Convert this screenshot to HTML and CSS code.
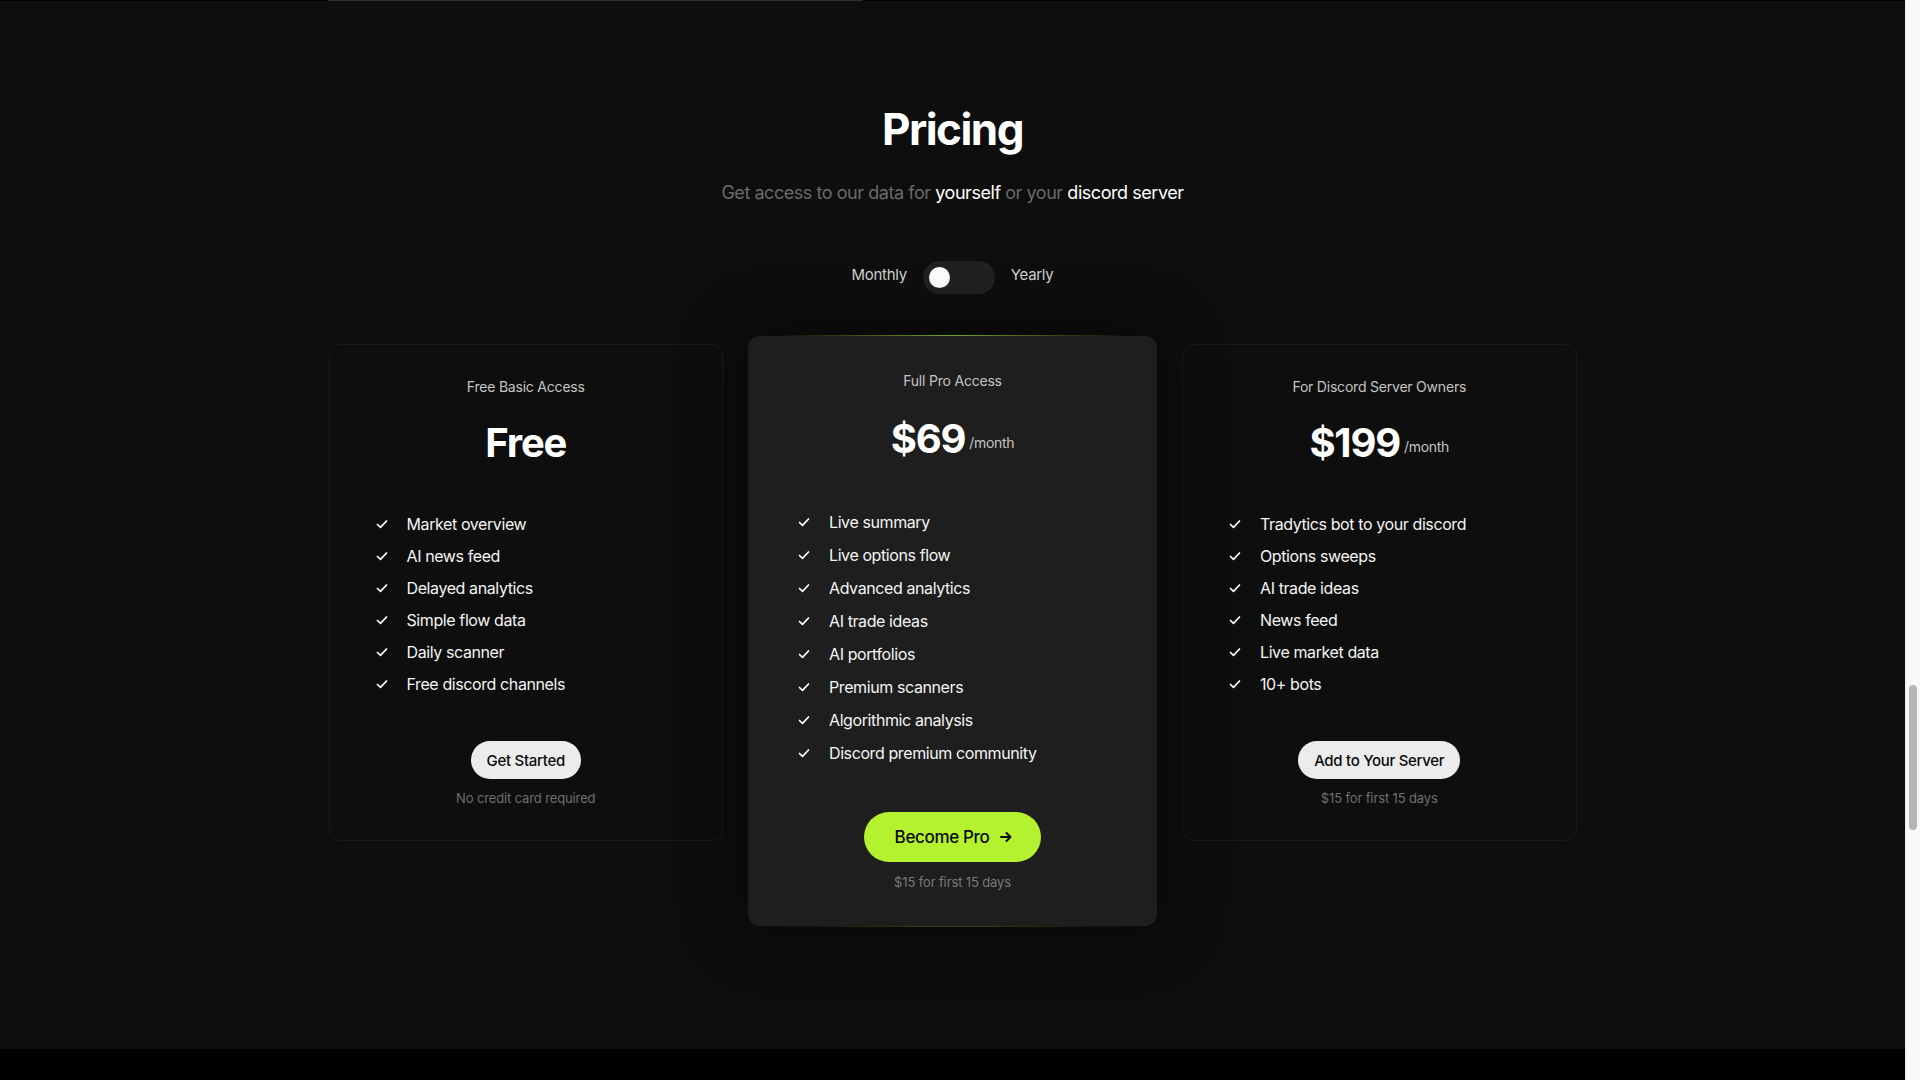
FILE: index.html
```html
<!DOCTYPE html>
<html lang="en">
<head>
<meta charset="utf-8">
<title>Pricing</title>
<link rel="stylesheet" href="styles.css">
</head>
<body>
<div class="page">
  <div class="top-strip"><div class="top-line"></div></div>
  <section class="pricing">
    <h1 class="title">Pricing</h1>
    <p class="subtitle">Get access to our data for <span class="hl">yourself</span> or your <span class="hl">discord server</span></p>
    <div class="toggle-row">
      <span class="toggle-label">Monthly</span>
      <div class="toggle"><div class="knob"></div></div>
      <span class="toggle-label">Yearly</span>
    </div>
    <div class="cards">
      <div class="card side">
        <div class="plan">Free Basic Access</div>
        <div class="price-row"><span class="price">Free</span></div>
        <ul class="features">
          <li><svg class="check" viewBox="0 0 12 12"><path d="M1.5 6.5 L4.5 9.3 L10.5 3"/></svg>Market overview</li>
          <li><svg class="check" viewBox="0 0 12 12"><path d="M1.5 6.5 L4.5 9.3 L10.5 3"/></svg>AI news feed</li>
          <li><svg class="check" viewBox="0 0 12 12"><path d="M1.5 6.5 L4.5 9.3 L10.5 3"/></svg>Delayed analytics</li>
          <li><svg class="check" viewBox="0 0 12 12"><path d="M1.5 6.5 L4.5 9.3 L10.5 3"/></svg>Simple flow data</li>
          <li><svg class="check" viewBox="0 0 12 12"><path d="M1.5 6.5 L4.5 9.3 L10.5 3"/></svg>Daily scanner</li>
          <li><svg class="check" viewBox="0 0 12 12"><path d="M1.5 6.5 L4.5 9.3 L10.5 3"/></svg>Free discord channels</li>
        </ul>
        <div class="cta">
          <a class="btn light">Get Started</a>
          <span class="note">No credit card required</span>
        </div>
      </div>

      <div class="card pro">
        <div class="plan">Full Pro Access</div>
        <div class="price-row"><span class="price">$69</span><span class="per">/month</span></div>
        <ul class="features">
          <li><svg class="check" viewBox="0 0 12 12"><path d="M1.5 6.5 L4.5 9.3 L10.5 3"/></svg>Live summary</li>
          <li><svg class="check" viewBox="0 0 12 12"><path d="M1.5 6.5 L4.5 9.3 L10.5 3"/></svg>Live options flow</li>
          <li><svg class="check" viewBox="0 0 12 12"><path d="M1.5 6.5 L4.5 9.3 L10.5 3"/></svg>Advanced analytics</li>
          <li><svg class="check" viewBox="0 0 12 12"><path d="M1.5 6.5 L4.5 9.3 L10.5 3"/></svg>AI trade ideas</li>
          <li><svg class="check" viewBox="0 0 12 12"><path d="M1.5 6.5 L4.5 9.3 L10.5 3"/></svg>AI portfolios</li>
          <li><svg class="check" viewBox="0 0 12 12"><path d="M1.5 6.5 L4.5 9.3 L10.5 3"/></svg>Premium scanners</li>
          <li><svg class="check" viewBox="0 0 12 12"><path d="M1.5 6.5 L4.5 9.3 L10.5 3"/></svg>Algorithmic analysis</li>
          <li><svg class="check" viewBox="0 0 12 12"><path d="M1.5 6.5 L4.5 9.3 L10.5 3"/></svg>Discord premium community</li>
        </ul>
        <div class="cta">
          <a class="btn lime">Become Pro <svg class="arrow" viewBox="0 0 12 10"><path d="M1 5 H10.5 M6.5 1 L10.5 5 L6.5 9"/></svg></a>
          <span class="note">$15 for first 15 days</span>
        </div>
      </div>

      <div class="card side">
        <div class="plan">For Discord Server Owners</div>
        <div class="price-row"><span class="price">$199</span><span class="per">/month</span></div>
        <ul class="features">
          <li><svg class="check" viewBox="0 0 12 12"><path d="M1.5 6.5 L4.5 9.3 L10.5 3"/></svg>Tradytics bot to your discord</li>
          <li><svg class="check" viewBox="0 0 12 12"><path d="M1.5 6.5 L4.5 9.3 L10.5 3"/></svg>Options sweeps</li>
          <li><svg class="check" viewBox="0 0 12 12"><path d="M1.5 6.5 L4.5 9.3 L10.5 3"/></svg>AI trade ideas</li>
          <li><svg class="check" viewBox="0 0 12 12"><path d="M1.5 6.5 L4.5 9.3 L10.5 3"/></svg>News feed</li>
          <li><svg class="check" viewBox="0 0 12 12"><path d="M1.5 6.5 L4.5 9.3 L10.5 3"/></svg>Live market data</li>
          <li><svg class="check" viewBox="0 0 12 12"><path d="M1.5 6.5 L4.5 9.3 L10.5 3"/></svg>10+ bots</li>
        </ul>
        <div class="cta">
          <a class="btn light">Add to Your Server</a>
          <span class="note">$15 for first 15 days</span>
        </div>
      </div>
    </div>
  </section>
  <div class="footer-band"></div>
</div>
<div class="scrollbar"><div class="thumb"></div></div>
</body>
</html>
```
FILE: styles.css
```css
* { box-sizing: border-box; }
html, body { margin: 0; padding: 0; height: 100%; }
body {
  display: flex;
  overflow: hidden;
  background: #0e0e0e;
  font-family: Inter, "Noto Sans", sans-serif;
  color: #f2f2f2;
}
.page {
  flex: 1;
  display: flex;
  flex-direction: column;
  min-width: 0;
}
.top-strip { height: 1px; background: #000; flex: none; }
.top-line { margin-left: 328px; width: 535px; height: 1px; background: #303030; }

.pricing {
  height: 1048px;
  flex: none;
  background: #0e0e0e;
  padding-top: 102px;
  display: flex;
  flex-direction: column;
  align-items: center;
}
.title {
  margin: 0;
  font-size: 44px;
  line-height: 52px;
  font-weight: 700;
  letter-spacing: -0.035em;
  color: #fff;
}
.subtitle {
  margin: 24px 0 0;
  font-size: 18px;
  line-height: 28px;
  color: #6a6a6a;
  letter-spacing: -0.025em;
}
.subtitle .hl { color: #fff; }

.toggle-row {
  margin-top: 54px;
  display: flex;
  align-items: center;
  gap: 16px;
}
.toggle-label {
  font-size: 15px;
  line-height: 20px;
  color: #d2d2d2;
  padding-bottom: 5px;
  letter-spacing: -0.02em;
}
.toggle {
  width: 72px;
  height: 33px;
  border-radius: 17px;
  background: #212121;
  display: flex;
  align-items: center;
  padding-left: 6px;
}
.knob { width: 21px; height: 21px; border-radius: 50%; background: #fff; }

.cards {
  margin-top: 42px;
  width: 1248px;
  display: grid;
  grid-template-columns: 1fr 409px 1fr;
  gap: 25px;
  align-items: start;
}
.card {
  display: flex;
  flex-direction: column;
  align-items: center;
  border-radius: 12px;
}
.card.side {
  margin-top: 8px;
  border: 1px solid #1a1a1a;
  background: #0e0e0e;
  padding: 32px 0 33px;
}
.card.pro {
  position: relative;
  background: #1e1e1e;
  padding: 35px 0 35px;
  box-shadow: 0 0 60px 10px rgba(0,0,0,0.45);
}
.card.pro::before, .card.pro::after {
  content: "";
  position: absolute;
  left: 30px;
  right: 30px;
  height: 1px;
  background: linear-gradient(90deg, rgba(140,190,40,0) 0%, rgba(140,190,40,0.85) 50%, rgba(140,190,40,0) 100%);
}
.card.pro::before { top: -1px; }
.card.pro::after { bottom: -1px; opacity: 0.4; }

.plan {
  font-size: 14px;
  line-height: 20px;
  color: #c4c4c4;
  letter-spacing: -0.015em;
}
.price-row {
  margin-top: 22px;
  display: flex;
  align-items: flex-end;
  gap: 4px;
}
.pro .price-row { margin-top: 24px; }
.price {
  font-size: 40px;
  line-height: 48px;
  font-weight: 700;
  letter-spacing: -0.03em;
  color: #fff;
}
.per {
  font-size: 14px;
  line-height: 20px;
  color: #c4c4c4;
  margin-bottom: 10px;
  letter-spacing: -0.02em;
}

.features {
  list-style: none;
  margin: 45px 0 0;
  padding: 0 0 0 46px;
  align-self: stretch;
  display: flex;
  flex-direction: column;
  gap: 8px;
}
.pro .features { margin-top: 47px; padding-left: 50px; gap: 9px; }
.features li {
  display: flex;
  align-items: center;
  gap: 19px;
  font-size: 16px;
  line-height: 24px;
  color: #f4f4f4;
  letter-spacing: -0.025em;
}
.check {
  width: 12px;
  height: 12px;
  flex: none;
  fill: none;
  stroke: #fff;
  stroke-width: 1.7;
  stroke-linecap: round;
  stroke-linejoin: round;
}

.cta {
  margin-top: 45px;
  display: flex;
  flex-direction: column;
  align-items: center;
  gap: 10px;
}
.pro .cta { margin-top: 47px; gap: 11px; }
.btn {
  display: inline-flex;
  align-items: center;
  justify-content: center;
  border-radius: 999px;
  font-weight: 500;
  color: #0a0a0a;
  text-decoration: none;
  letter-spacing: -0.02em;
}
.btn.light {
  height: 38px;
  padding: 0 16px;
  background: #ececec;
  font-size: 15px;
}
.btn.lime {
  height: 50px;
  padding: 0 29px 0 31px;
  background: #b4f22f;
  font-size: 17px;
  gap: 11px;
}
.arrow {
  width: 12px;
  height: 10px;
  fill: none;
  stroke: #0a0a0a;
  stroke-width: 1.9;
  stroke-linecap: round;
  stroke-linejoin: round;
}
.note {
  font-size: 13px;
  line-height: 18px;
  color: #6f6f6f;
  letter-spacing: -0.01em;
}
.pro .note { color: #7a7a7a; }

.footer-band { flex: 1; background: #000; }

.scrollbar {
  width: 15px;
  flex: none;
  background: #f9f9f9;
  border-left: 1px solid #ececec;
  padding: 685px 3px 0 3px;
}
.thumb {
  width: 8px;
  height: 145px;
  border-radius: 4px;
  background: #b6b6b6;
}
```
